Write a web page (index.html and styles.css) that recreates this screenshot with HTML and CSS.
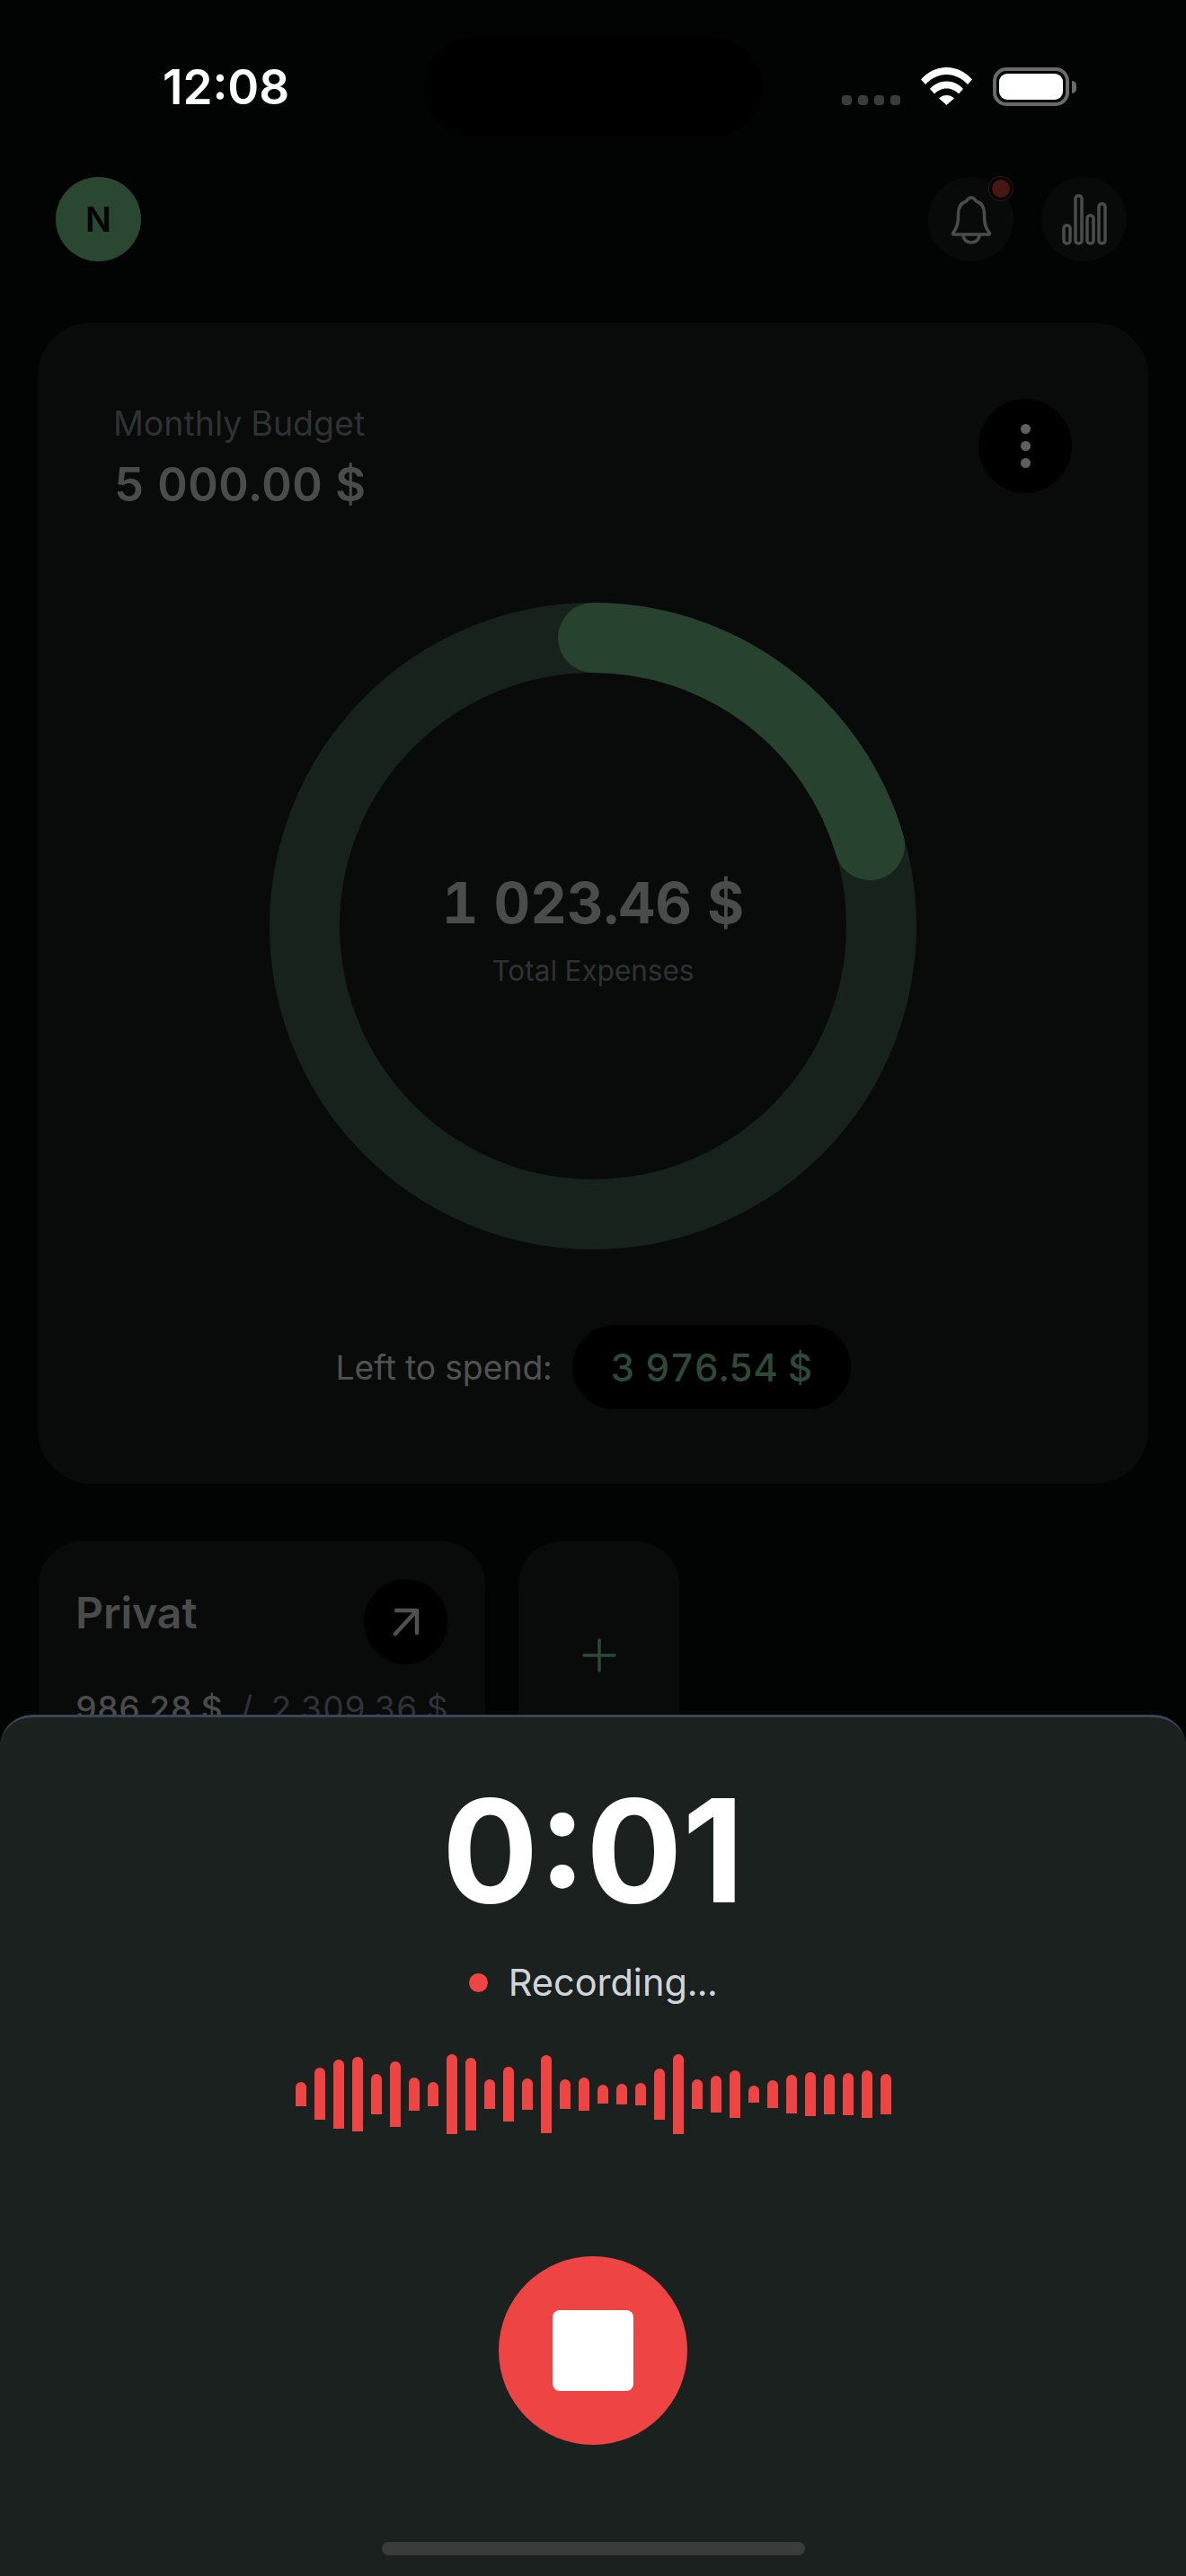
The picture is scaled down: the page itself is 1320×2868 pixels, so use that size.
FILE: index.html
```html
<!DOCTYPE html>
<html lang="en">
<head>
<meta charset="utf-8">
<title>Recording</title>
<link rel="stylesheet" href="styles.css">
</head>
<body>
<div class="phone">
  <div class="island"></div>
  <div class="status">
    <span class="time">12:08</span>
    <div class="status-icons">
      <div class="signal"><i></i><i></i><i></i><i></i></div>
      <svg class="wifi" width="57" height="42" viewBox="0 0 57 42"><path d="M0 13.5C7.5 5 17.5 0 28.5 0S49.5 5 57 13.5L52 19C45.5 12 37.5 8 28.5 8S11.5 12 5 19Z"/><path d="M10 24C15 18.5 21 15.5 28.5 15.5S42 18.5 47 24L42 29.5C38.5 26 34 23.5 28.5 23.5S18.5 26 15 29.5Z"/><path d="M20 34.5C22.5 32 25.5 31 28.5 31S34.5 32 37 34.5L28.5 42Z"/></svg>
      <div class="battery"><div class="battery-body"><div class="battery-fill"></div></div><div class="battery-nub"></div></div>
    </div>
  </div>

  <header class="topbar">
    <div class="avatar">N</div>
    <div class="top-actions">
      <div class="round-btn bell-btn">
        <svg width="46" height="55" viewBox="0 0 46 55" fill="none" stroke="#4a4b4a" stroke-width="3.500" stroke-linejoin="round" stroke-linecap="round"><path d="M23 3C20 3 18.500 5.500 17.500 7C11.500 9 8.500 14 8.500 21C8.500 31 7.500 36 3 42C2 43.500 2.500 44 4 44H42C43.500 44 44 43.500 43 42C38.500 36 37.500 31 37.500 21C37.500 14 34.500 9 28.500 7C27.500 5.500 26 3 23 3Z"/><path d="M14 44.500C14 49.500 18 53 23 53S32 49.500 32 44.500"/></svg>
        <span class="badge"></span>
      </div>
      <div class="round-btn">
        <svg width="50" height="57" viewBox="0 0 50 57" fill="none" stroke="#4a4b4a" stroke-width="3.500" stroke-linejoin="round"><rect x="2" y="35" width="7" height="20" rx="3"/><rect x="15" y="2" width="7" height="53" rx="3"/><rect x="28" y="24" width="7" height="31" rx="3"/><rect x="41" y="11" width="7" height="44" rx="3"/></svg>
      </div>
    </div>
  </header>

  <section class="budget-card">
    <div class="budget-head">
      <div>
        <div class="budget-label">Monthly Budget</div>
        <div class="budget-value">5 000.00 $</div>
      </div>
      <div class="kebab"><i></i><i></i><i></i></div>
    </div>
    <div class="donut">
      <svg class="donut-ring" width="720" height="720" viewBox="0 0 720 720" fill="none" stroke-width="78">
        <circle cx="360" cy="360" r="321" stroke="#18221d"/>
        <path d="M360 39A321 321 0 0 1 668 270" stroke="#284230" stroke-linecap="round"/>
      </svg>
      <div class="donut-text">
        <div class="total">1 023.46 $</div>
        <div class="total-label">Total Expenses</div>
      </div>
    </div>
    <div class="left-row">
      <span class="left-label">Left to spend:</span>
      <span class="left-pill">3 976.54 $</span>
    </div>
  </section>

  <section class="accounts">
    <div class="account">
      <div class="account-head">
        <span class="account-name">Privat</span>
        <div class="arrow-btn">
          <svg width="30" height="32" viewBox="0 0 30 32" fill="none" stroke="#4f504f" stroke-width="4.500" stroke-linecap="round" stroke-linejoin="round"><path d="M3 29L26 4"/><path d="M4 3H27V28"/></svg>
        </div>
      </div>
      <div class="account-amounts"><span class="spent">986.28 $</span><span class="slash">/</span><span class="limit">2 309.36 $</span></div>
    </div>
    <div class="account-add">
      <svg width="38" height="38" viewBox="0 0 38 38" stroke="#2c4a37" stroke-width="3.500" stroke-linecap="round"><path d="M19 2V36M2 19H36"/></svg>
    </div>
  </section>

  <section class="sheet">
    <div class="timer">0:01</div>
    <div class="rec-row"><span class="rec-dot"></span><span class="rec-text">Recording...</span></div>
    <div class="wave">
      <i style="height:27px"></i><i style="height:58px"></i><i style="height:77px"></i><i style="height:83px"></i><i style="height:45px"></i><i style="height:73px"></i><i style="height:37px"></i><i style="height:27px"></i><i style="height:89px"></i><i style="height:81px"></i><i style="height:33px"></i><i style="height:61px"></i><i style="height:35px"></i><i style="height:87px"></i><i style="height:33px"></i><i style="height:37px"></i><i style="height:21px"></i><i style="height:23px"></i><i style="height:25px"></i><i style="height:57px"></i><i style="height:89px"></i><i style="height:33px"></i><i style="height:41px"></i><i style="height:53px"></i><i style="height:19px"></i><i style="height:31px"></i><i style="height:43px"></i><i style="height:49px"></i><i style="height:45px"></i><i style="height:47px"></i><i style="height:53px"></i><i style="height:45px"></i>
    </div>
    <div class="stop"><div class="stop-square"></div></div>
    <div class="home-bar"></div>
  </section>
</div>
</body>
</html>
```
FILE: styles.css
```css
* { box-sizing: border-box; }
html, body { margin: 0; padding: 0; }
body { background: #020403; font-family: Inter, "Liberation Sans", sans-serif; font-variant-numeric: tabular-nums; }
i { display: block; }

.phone { position: relative; width: 1320px; height: 2868px; overflow: hidden; background: #020403; }
.island { position: absolute; left: 472px; top: 41px; width: 376px; height: 111px; border-radius: 56px; background: #000; }

.status { height: 197px; display: flex; justify-content: space-between; align-items: flex-start; padding: 0 122px 0 181px; }
.time { margin-top: 66px; font-size: 53px; line-height: 62px; font-weight: 600; color: #fff; font-variant-numeric: normal; }
.status-icons { margin-top: 75px; display: flex; align-items: flex-start; }
.signal { display: flex; gap: 7px; margin-top: 31px; }
.signal i { width: 11px; height: 11px; border-radius: 4px; background: #3a3b3a; }
.wifi { margin-left: 23px; fill: #fff; }
.battery { margin-left: 23px; display: flex; align-items: center; height: 43px; }
.battery-body { width: 85px; height: 43px; padding: 3px; border: 4px solid #6a6a6a; border-radius: 15px; }
.battery-fill { width: 100%; height: 100%; background: #fff; border-radius: 9px; }
.battery-nub { width: 5px; height: 14px; margin-left: 3px; background: #6a6a6a; border-radius: 0 5px 5px 0; }

.topbar { height: 94px; padding: 0 66px 0 62px; display: flex; justify-content: space-between; }
.avatar { width: 95px; height: 94px; border-radius: 50%; background: #2a4732; color: #030504; font-size: 38px; font-weight: 600; display: flex; align-items: center; justify-content: center; }
.top-actions { display: flex; gap: 31px; }
.round-btn { position: relative; width: 95px; height: 94px; border-radius: 50%; background: #080a09; display: flex; align-items: center; justify-content: center; }
.badge { position: absolute; left: 71px; top: 3px; width: 20px; height: 20px; border-radius: 50%; background: #4a1612; box-shadow: 0 0 0 3px #020403, 0 0 0 4px #3a1210; }

.budget-card { margin: 68px 42px 0; height: 1293px; padding: 85px 85px 0; border-radius: 60px; background: #080b0a; }
.budget-head { display: flex; justify-content: space-between; align-items: flex-start; }
.budget-label { margin-top: 5px; margin-left: -1px; font-size: 37.5px; line-height: 45px; color: #2f3133; }
.budget-value { margin-top: 14px; font-size: 52.5px; line-height: 62px; font-weight: 600; color: #4a4b4b; }
.kebab { width: 104px; height: 105px; border-radius: 50%; background: #000; display: flex; flex-direction: column; align-items: center; justify-content: center; gap: 8px; }
.kebab i { width: 11px; height: 11px; border-radius: 50%; background: #5f5f5f; }

.donut { margin: 101px auto 0; width: 720px; height: 720px; display: grid; place-items: center; }
.donut-ring, .donut-text { grid-area: 1 / 1; }
.donut-text { text-align: center; padding-top: 2px; }
.total { font-size: 63px; line-height: 80px; font-weight: 700; color: #4a4b4b; }
.total-label { margin-top: 17px; font-size: 31.5px; line-height: 38px; color: #2f3133; }

.left-row { margin-top: 84px; display: flex; align-items: center; justify-content: center; gap: 23px; }
.left-label { font-size: 37.3px; line-height: 45px; color: #505252; }
.left-pill { height: 94px; padding: 0 42.5px; border-radius: 47px; background: #000; color: #2c4a37; font-size: 42px; font-weight: 500; display: flex; align-items: center; }

.accounts { margin-top: 64px; padding: 0 43px; display: flex; gap: 37px; align-items: flex-start; }
.account { width: 497px; height: 300px; padding: 42px 42px 0 41px; border-radius: 48px; background: #080b0a; }
.account-head { display: flex; justify-content: space-between; align-items: flex-start; }
.account-name { margin-top: 9px; font-size: 48px; line-height: 58px; font-weight: 600; color: #4a4b4b; }
.arrow-btn { width: 93px; height: 95px; border-radius: 50%; background: #000; display: flex; align-items: center; justify-content: center; }
.account-amounts { margin-top: 25px; display: flex; gap: 20px; font-size: 37px; line-height: 47px; white-space: nowrap; }
.spent { color: #4a4b4b; font-weight: 500; }
.slash, .limit { color: #2f3338; }
.account-add { width: 179px; height: 300px; border-radius: 48px; background: #080b0a; display: flex; justify-content: center; padding-top: 108px; }

.sheet { position: absolute; left: 0; right: 0; bottom: 0; height: 959px; border-top: 3px solid #3c4558; border-radius: 36px 36px 0 0; background: #1b211f; display: flex; flex-direction: column; align-items: center; }
.timer { margin-top: 52px; font-size: 159px; line-height: 192px; font-weight: 700; color: #fff; font-variant-numeric: normal; }
.rec-row { margin-top: 26px; display: flex; align-items: center; gap: 23px; }
.rec-dot { width: 21px; height: 21px; border-radius: 50%; background: #ef4444; }
.rec-text { font-size: 41.5px; line-height: 51px; color: #d1d5db; }
.wave { margin-top: 53px; height: 90px; display: flex; align-items: center; gap: 9px; }
.wave i { width: 12px; border-radius: 6px 6px 0 0; background: #ef4444; }
.stop { margin-top: 136px; width: 210px; height: 210px; border-radius: 50%; background: #ef4444; display: flex; align-items: center; justify-content: center; }
.stop-square { width: 90px; height: 90px; border-radius: 8px; background: #fff; }
.home-bar { margin-top: 108px; width: 471px; height: 15px; border-radius: 8px; background: #3a3c3b; }
```
